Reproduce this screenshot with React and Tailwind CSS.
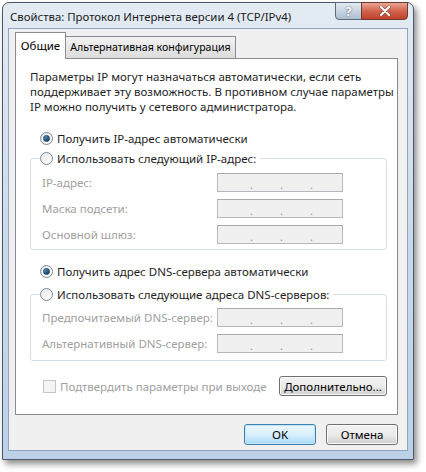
import React from 'react';

const font = { fontFamily: '"Segoe UI", "Noto Sans", "Open Sans", sans-serif' };

function Radio({ checked, disabled }) {
  return (
    <span
      className={`flex h-[13px] w-[13px] shrink-0 items-center justify-center rounded-full border ${
        disabled ? 'border-[#c8c8c8] bg-[#f4f4f4]' : 'border-[#7b8a99] bg-gradient-to-br from-[#e6e6e6] to-[#ffffff]'
      }`}
    >
      {checked && (
        <span className="h-[7px] w-[7px] rounded-full border border-[#1c3e5c] bg-gradient-to-br from-[#5aa6d6] to-[#12304a]" />
      )}
    </span>
  );
}

function IpBox() {
  return (
    <div className="flex h-[19px] w-[126px] items-center border border-[#b5b9bd] border-t-[#a6abb0] bg-[#f0f0f0] text-[11px] text-[#9a9a9a]">
      <div className="flex w-full gap-[27px] pl-[32px] pt-[3px]">
        <span>.</span>
        <span>.</span>
        <span>.</span>
      </div>
    </div>
  );
}

function FieldRow({ label, className = '' }) {
  return (
    <div className={`flex items-center ${className}`}>
      <span className="w-[186px] whitespace-nowrap pl-[11px] text-[#a0a0a0]">{label}</span>
      <IpBox />
    </div>
  );
}

function Button({ children, className = '', primary }) {
  return (
    <div
      className={`flex items-center justify-center whitespace-nowrap rounded-[3px] border text-black ${
        primary
          ? 'border-[#3c7fb1] bg-gradient-to-b from-[#eaf6fd] via-[#d9f0fc] to-[#a7d9f5] shadow-[inset_0_0_0_1px_#c6e6f8]'
          : 'border-[#707070] bg-gradient-to-b from-[#f2f2f2] via-[#ebebeb] to-[#cfcfcf] shadow-[inset_0_0_0_1px_#fcfcfc]'
      } ${className}`}
    >
      {children}
    </div>
  );
}

export default function App() {
  return (
    <div className="h-[472px] w-[426px] bg-white pl-[2px] pt-[2px] text-[11.5px] leading-[15px]" style={font}>
      <div className="flex h-[458px] w-[412px] flex-col rounded-t-[7px] border border-[#4a5869] bg-gradient-to-b from-[#e3ebf3] via-[#cbdaea] to-[#bcd1e8] shadow-[3px_4px_6px_rgba(0,0,0,0.45)]">
        {/* title bar */}
        <div className="flex h-[25px] shrink-0 items-start justify-between">
          <span className="ml-[7px] mt-[6px] whitespace-nowrap text-[11.4px] text-[#1b1b1b]">
            Свойства: Протокол Интернета версии 4 (TCP/IPv4)
          </span>
          <div className="mr-[5px] mt-[-1px] flex">
            <div className="flex h-[18px] w-[27px] items-center justify-center rounded-bl-[4px] border border-[#5b6b7d] bg-gradient-to-b from-[#e4ebf2] via-[#c9d5e1] to-[#aebdcd] text-[12px] font-bold text-white [text-shadow:0_0_2px_#34495e]">
              ?
            </div>
            <div className="ml-[-1px] flex h-[18px] w-[47px] items-center justify-center rounded-br-[4px] border border-[#6b3a30] bg-gradient-to-b from-[#e9a595] via-[#d2634c] to-[#c0412a]">
              <svg width="12" height="10" viewBox="0 0 12 10">
                <path d="M2 1 L10 9 M10 1 L2 9" stroke="#3b1a14" strokeWidth="3.4" strokeLinecap="round" opacity="0.5" />
                <path d="M2 1 L10 9 M10 1 L2 9" stroke="#ffffff" strokeWidth="2.2" strokeLinecap="round" />
              </svg>
            </div>
          </div>
        </div>

        {/* client */}
        <div className="mx-[5px] mb-[8px] flex flex-1 flex-col border border-[#8fa5bb] bg-[#f0f0f0] pl-[6px] pr-[9px] pt-[3px]">
          {/* tabs */}
          <div className="relative z-10 flex h-[27px] items-end">
            <div className="flex h-[27px] w-[51px] items-center justify-center border border-b-0 border-[#898c95] bg-white pb-[1px] text-black">
              Общие
            </div>
            <div className="mb-[1px] flex h-[22px] w-[170px] items-center justify-center whitespace-nowrap border border-b-0 border-l-0 border-[#898c95] bg-gradient-to-b from-[#f2f2f2] to-[#dcdcdc] text-[10.6px] text-black">
              Альтернативная конфигурация
            </div>
          </div>

          {/* panel */}
          <div className="-mt-[1px] flex h-[357px] flex-col border border-[#898c95] bg-white pl-[14px] pr-[10px]">
            <p className="mt-[10px] whitespace-nowrap text-[#1e1e1e]">
              Параметры IP могут назначаться автоматически, если сеть
              <br />
              поддерживает эту возможность. В противном случае параметры
              <br />
              IP можно получить у сетевого администратора.
            </p>

            <div className="mt-[17px] flex items-center gap-[4px] pl-[10px] text-[#1e1e1e]">
              <Radio checked />
              <span>Получить IP-адрес автоматически</span>
            </div>

            <fieldset className="mt-[5px] h-[99px] rounded-[3px] border border-[#d5dfe5]">
              <legend className="ml-[9px] flex items-center gap-[4px] pr-[4px] text-[#1e1e1e]">
                <Radio />
                <span>Использовать следующий IP-адрес:</span>
              </legend>
              <FieldRow label="IP-адрес:" className="mt-[7px]" />
              <FieldRow label="Маска подсети:" className="mt-[7px]" />
              <FieldRow label="Основной шлюз:" className="mt-[7px]" />
            </fieldset>

            <div className="mt-[14px] flex items-center gap-[4px] pl-[10px] text-[#1e1e1e]">
              <Radio checked />
              <span>Получить адрес DNS-сервера автоматически</span>
            </div>

            <fieldset className="mt-[8px] h-[74px] rounded-[3px] border border-[#d5dfe5]">
              <legend className="ml-[9px] flex items-center gap-[4px] pr-[4px] text-[#1e1e1e]">
                <Radio />
                <span>Использовать следующие адреса DNS-серверов:</span>
              </legend>
              <FieldRow label="Предпочитаемый DNS-сервер:" className="mt-[6px]" />
              <FieldRow label="Альтернативный DNS-сервер:" className="mt-[7px]" />
            </fieldset>

            <div className="mt-[15px] flex items-center justify-between">
              <div className="ml-[13px] flex items-center gap-[3px] whitespace-nowrap text-[#a0a0a0]">
                <span className="h-[13px] w-[13px] border border-[#c6c6c6] bg-[#f4f4f4]" />
                <span className="px-[1px]">Подтвердить параметры при выходе</span>
              </div>
              <Button className="h-[20px] w-[108px]">Дополнительно...</Button>
            </div>
          </div>

          {/* bottom buttons */}
          <div className="mt-[9px] flex justify-end gap-[10px]">
            <Button primary className="h-[21px] w-[72px]">OK</Button>
            <Button className="h-[21px] w-[72px]">Отмена</Button>
          </div>
        </div>
      </div>
    </div>
  );
}
